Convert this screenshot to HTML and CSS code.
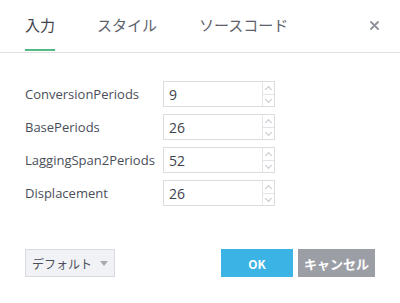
FILE: index.html
```html
<!DOCTYPE html>
<html lang="ja">
<head>
  <meta charset="UTF-8">
  <title>入力</title>
  <link rel="stylesheet" href="styles.css">
</head>
<body>
  <div class="dialog">
    <div class="tabs">
      <div class="tab active">入力</div>
      <div class="tab">スタイル</div>
      <div class="tab">ソースコード</div>
      <button class="close" aria-label="close">
        <svg width="9" height="9" viewBox="0 0 9 9"><path d="M1 1L8 8M8 1L1 8" stroke="#8e9199" stroke-width="1.8" stroke-linecap="round"/></svg>
      </button>
    </div>

    <div class="fields">
      <div class="row">
        <label>ConversionPeriods</label>
        <div class="spin"><input value="9"><div class="arrows"><span class="up"></span><span class="down"></span></div></div>
      </div>
      <div class="row">
        <label>BasePeriods</label>
        <div class="spin"><input value="26"><div class="arrows"><span class="up"></span><span class="down"></span></div></div>
      </div>
      <div class="row">
        <label>LaggingSpan2Periods</label>
        <div class="spin"><input value="52"><div class="arrows"><span class="up"></span><span class="down"></span></div></div>
      </div>
      <div class="row">
        <label>Displacement</label>
        <div class="spin"><input value="26"><div class="arrows"><span class="up"></span><span class="down"></span></div></div>
      </div>
    </div>

    <div class="footer">
      <button class="btn-default">デフォルト<span class="caret"></span></button>
      <div class="actions">
        <button class="btn ok">OK</button>
        <button class="btn cancel">キャンセル</button>
      </div>
    </div>
  </div>
</body>
</html>
```

FILE: styles.css
```css
* {
  margin: 0;
  padding: 0;
  box-sizing: border-box;
}

body {
  font-family: "Open Sans", "Noto Sans CJK JP", sans-serif;
  background: #ffffff;
  color: #4a4e59;
}

.dialog {
  width: 400px;
  height: 303px;
}

.tabs {
  display: flex;
  align-items: center;
  height: 53px;
  padding: 0 21px 2px 25px;
  border-bottom: 1px solid #dfe0e3;
}

.tab {
  position: relative;
  font-family: "Noto Sans CJK JP", sans-serif;
  font-size: 15px;
  color: #5d616c;
  margin-right: 42px;
  line-height: 20px;
}

.tab.active {
  color: #3f434d;
}

.tab.active::after {
  content: "";
  position: absolute;
  left: 0;
  right: 0;
  bottom: -16px;
  height: 2px;
  background: #53b987;
}

.close {
  margin-left: auto;
  border: none;
  background: none;
  width: 9px;
  height: 9px;
  display: flex;
}

.fields {
  padding: 28px 25px 0;
  display: flex;
  flex-direction: column;
  gap: 7px;
}

.row {
  display: flex;
  align-items: center;
  height: 26px;
}

.row label {
  width: 138px;
  font-size: 13px;
  color: #4a4e59;
}

.spin {
  display: flex;
  width: 112px;
  height: 26px;
  border: 1px solid #dadce0;
}

.spin input {
  flex: 1;
  min-width: 0;
  border: none;
  outline: none;
  padding-left: 5px;
  font-family: "Open Sans", sans-serif;
  font-size: 14px;
  color: #3e424c;
}

.arrows {
  width: 12px;
  border-left: 1px solid #e3e4e7;
  display: flex;
  flex-direction: column;
}

.arrows span {
  flex: 1;
  position: relative;
}

.arrows .up {
  border-bottom: 1px solid #e3e4e7;
}

.arrows span::after {
  content: "";
  position: absolute;
  left: 3px;
  width: 4px;
  height: 4px;
  border-left: 1px solid #c4c7cc;
  border-top: 1px solid #c4c7cc;
}

.arrows .up::after {
  top: 5px;
  transform: rotate(45deg);
}

.arrows .down::after {
  top: 2px;
  transform: rotate(-135deg);
}

.footer {
  display: flex;
  justify-content: space-between;
  align-items: center;
  padding: 43px 25px 0;
}

.btn-default {
  width: 90px;
  height: 28px;
  background: #f1f2f6;
  border: 1px solid #d9dbe0;
  font-family: "Noto Sans CJK JP", sans-serif;
  font-size: 12px;
  color: #4a4e59;
  display: flex;
  align-items: center;
  justify-content: center;
  gap: 8px;
}

.caret {
  width: 0;
  height: 0;
  border-left: 4px solid transparent;
  border-right: 4px solid transparent;
  border-top: 5px solid #a6a9b0;
}

.actions {
  display: flex;
  gap: 5px;
}

.btn {
  height: 28px;
  border: none;
  color: #ffffff;
  font-family: "Noto Sans CJK JP", sans-serif;
  font-weight: bold;
  font-size: 13px;
}

.ok {
  width: 72px;
  background: #3bb3e4;
  font-size: 12px;
}

.cancel {
  width: 77px;
  background: #9c9ea6;
}
```
